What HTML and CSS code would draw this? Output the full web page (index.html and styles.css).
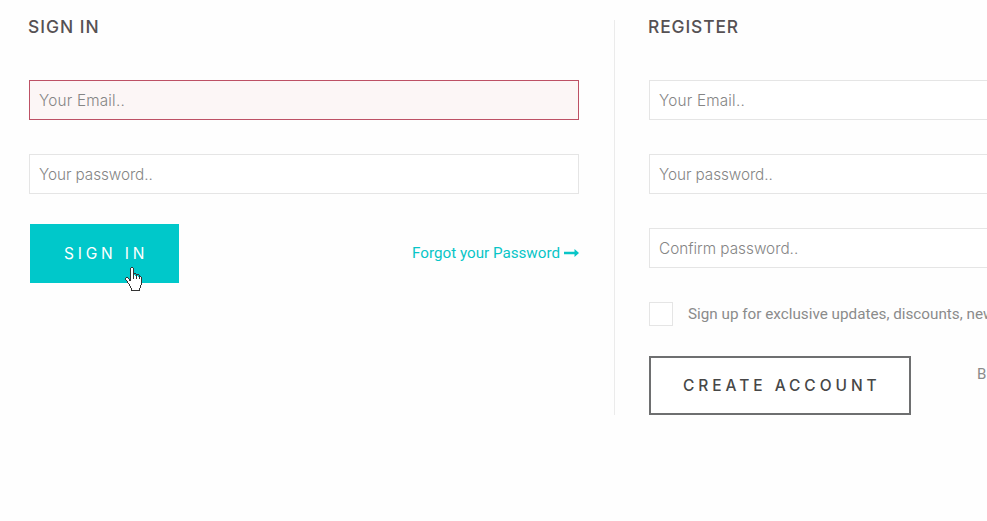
FILE: index.html
```html
<!DOCTYPE html>
<html lang="en">
<head>
<meta charset="utf-8">
<title>Sign in or register</title>
<link rel="stylesheet" href="styles.css">
</head>
<body>
<main class="account">
  <form class="panel signin">
    <h2 class="title title-signin">SIGN IN</h2>
    <input class="field email error" type="text" placeholder="Your Email..">
    <input class="field password" type="text" placeholder="Your password..">
    <div class="actions">
      <button class="btn btn-primary" type="button">SIGN IN
        <svg class="cursor" width="18" height="24" viewBox="0 0 18 24" shape-rendering="crispEdges">
          <path d="M6 1h2v7h2v1h3v1h3v1h1v7h-1v4h-1v2H6v-3H5v-2H4v-2H3v-2H2v-2H1v-2h2v1h2v2h1z" fill="#fff"/>
          <path d="M6 0h2v1H6zM5 1h1v13H5zM8 1h1v6H8zM9 6h2v1H9zM11 7h1v5h-1zM8 7h1v5H8zM12 7h2v1h-2zM14 8h1v4h-1zM15 9h1v1h-1zM16 10h1v8h-1zM15 18h1v3h-1zM14 21h1v3h-1zM6 23h8v1H6zM6 21h1v2H6zM5 19h1v2H5zM4 17h1v2H4zM3 16h1v1H3zM2 14h1v2H2zM1 13h1v1H1zM0 11h1v2H0zM1 10h2v1H1zM3 11h1v1H3zM4 12h1v2H4z" fill="#333"/>
        </svg>
      </button>
      <a class="forgot">Forgot your Password
        <svg width="15" height="8" viewBox="0 0 15 8"><path d="M0 2.8h10.5V0L15 4l-4.500 4V5.200H0z" fill="currentColor"/></svg>
      </a>
    </div>
  </form>
  <form class="panel register">
    <h2 class="title title-register">REGISTER</h2>
    <input class="field email" type="text" placeholder="Your Email..">
    <input class="field password" type="text" placeholder="Your password..">
    <input class="field confirm" type="text" placeholder="Confirm password..">
    <label class="updates"><span class="box"></span>Sign up for exclusive updates, discounts, new arrivals</label>
    <div class="create-row">
      <button class="btn btn-outline" type="button">CREATE ACCOUNT</button>
      <span class="terms">B</span>
    </div>
  </form>
</main>
</body>
</html>
```
FILE: styles.css
```css
* { box-sizing: border-box; }
body {
  margin: 0;
  height: 521px;
  overflow: hidden;
  background: #fefefe;
  font-family: Roboto, sans-serif;
}
.account {
  display: grid;
  grid-template-columns: 585px 373px;
  overflow: hidden;
  padding: 20px 0 0 29px;
}
.panel { height: 395px; }
.register {
  border-left: 1px solid #ebebeb;
  padding-left: 34px;
}
.title {
  margin: 0 0 40px -1px;
  height: 20px;
  font: 500 17.4px/13px Inter, sans-serif;
  color: #565153;
  white-space: nowrap;
}
.title-signin { letter-spacing: 1px; }
.title-register { letter-spacing: 0.9px; }
.field {
  display: block;
  width: 550px;
  height: 40px;
  margin: 0 0 34px;
  padding: 0 9px;
  border: 1px solid #e5e5e5;
  border-radius: 0;
  background: #fff;
  font: 300 15.3px Inter, sans-serif;
  outline: none;
}
.field::placeholder { color: #858585; opacity: 1; }
.email { letter-spacing: 0.2px; }
.password { letter-spacing: -0.07px; }
.error { border-color: #bd5165; background: #fcf6f6; }
.actions {
  display: flex;
  width: 550px;
  margin-top: -4px;
  padding-left: 1px;
  justify-content: space-between;
}
.btn {
  height: 59px;
  padding: 0;
  border: 0;
  font-family: Inter, sans-serif;
  font-size: 15.5px;
  text-align: left;
  white-space: nowrap;
}
.btn-primary {
  position: relative;
  width: 149px;
  padding-left: 34px;
  background: #00c8ca;
  color: #fff;
  letter-spacing: 3.8px;
}
.cursor { position: absolute; left: 95px; top: 43px; }
.forgot {
  display: flex;
  align-items: center;
  gap: 4px;
  height: 58px;
  color: #08c5c7;
  font-size: 15.2px;
  white-space: nowrap;
}
.updates {
  display: flex;
  align-items: center;
  height: 24px;
  color: #8b8b8b;
  font-size: 15.25px;
  white-space: nowrap;
}
.box {
  flex: none;
  width: 24px;
  height: 24px;
  margin-right: 15px;
  border: 1px solid #e5e5e5;
  background: #fff;
}
.create-row { display: flex; margin-top: 30px; }
.btn-outline {
  flex: none;
  width: 262px;
  padding-left: 32px;
  border: 2px solid #6e6f70;
  background: #fff;
  color: #474747;
  font-weight: 500;
  letter-spacing: 3.95px;
}
.terms {
  margin-left: 66px;
  color: #8b8b8b;
  font-size: 15px;
  line-height: 36px;
}
```
